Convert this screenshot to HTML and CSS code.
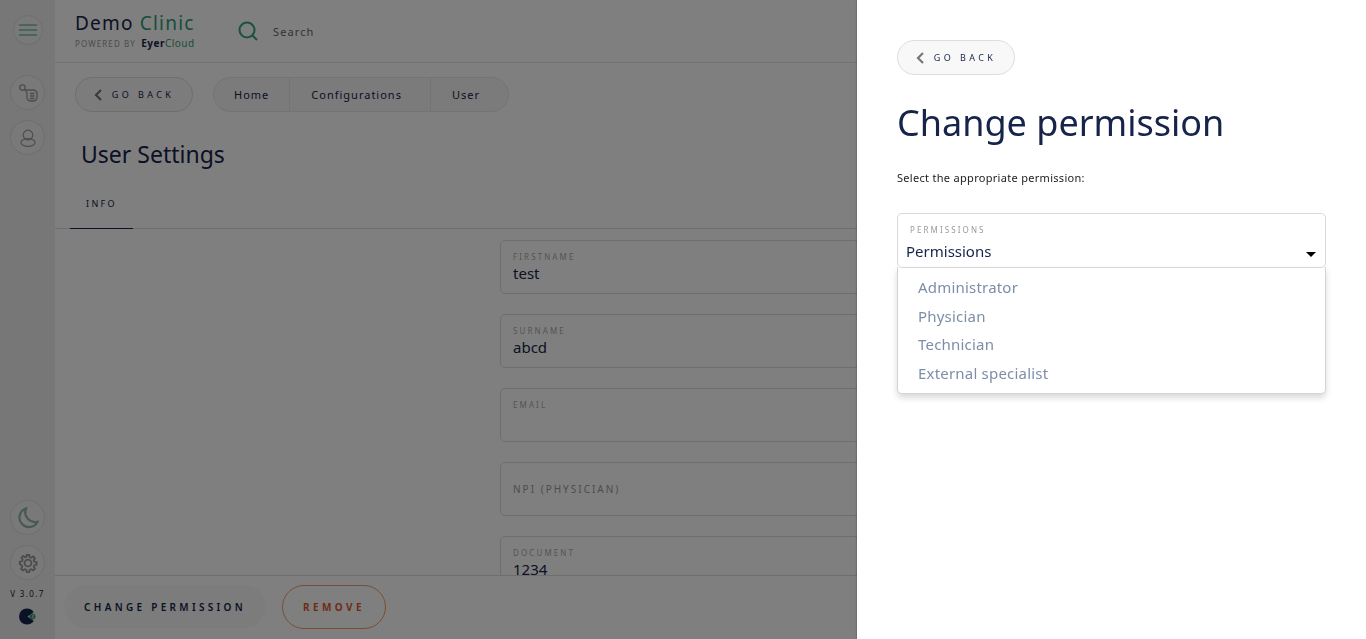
FILE: index.html
```html
<!DOCTYPE html>
<html lang="en">
<head>
    <meta charset="UTF-8">
    <meta name="viewport" content="width=device-width, initial-scale=1.0">
    <title>Change permission - Demo Clinic</title>
    <link rel="stylesheet" href="styles.css">
</head>
<body>
    <div class="app">
        <aside class="sidebar">
            <button class="side-btn side-btn-menu">
                <svg width="18" height="12" viewBox="0 0 18 12" fill="none" stroke="#35a583" stroke-width="1.2"><path d="M0 1h18M0 6h18M0 11h18"/></svg>
            </button>
            <button class="side-btn side-btn-first">
                <svg width="20" height="20" viewBox="0 0 20 20" fill="none" stroke="#999" stroke-width="1.3"><circle cx="4.5" cy="4.5" r="2.7"/><path d="M7 7h8.5a3.5 3.5 0 0 1 3.5 3.5v4a3.5 3.5 0 0 1-3.5 3.500h-3a3.500 3.500 0 0 1-3.500-3.500v-4.500z"/><path d="M12 10.500h4.500M12 13h4.500M12 15.500h4.500"/></svg>
            </button>
            <button class="side-btn">
                <svg width="16" height="18" viewBox="0 0 16 18" fill="none" stroke="#999" stroke-width="1.2"><circle cx="8" cy="6" r="4.800"/><ellipse cx="8" cy="13.500" rx="7" ry="3.800"/></svg>
            </button>
            <div class="side-spacer"></div>
            <button class="side-btn">
                <svg width="22" height="22" viewBox="0 0 22 22" fill="none" stroke="#8fb3a6" stroke-width="2.200"><path d="M9 1.500a9.500 9.500 0 1 0 11.500 13.200A9.800 9.800 0 0 1 9 1.500z"/></svg>
            </button>
            <button class="side-btn side-btn-gear">
                <svg width="20" height="20" viewBox="-1 -1 22 22" fill="none" stroke="#999" stroke-width="2"><circle cx="10" cy="10" r="3.800"/><path d="M8.600 1h2.800l.5 2.500 1.700.7 2.100-1.400 2 2-1.400 2.100.7 1.700 2.500.5v2.800l-2.500.5-.7 1.700 1.400 2.100-2 2-2.100-1.400-1.700.7-.5 2.500H8.600l-.5-2.500-1.700-.7-2.100 1.400-2-2 1.400-2.100-.7-1.700L1 11.400V8.600l2.500-.5.7-1.700-1.400-2.100 2-2 2.100 1.400 1.700-.7z"/></svg>
            </button>
            <div class="version">V 3.0.7</div>
            <svg class="side-logo" width="17" height="17" viewBox="0 0 17 17"><circle cx="8" cy="8.500" r="8" fill="#16244a"/><path d="M17 2.500 8.500 8.500 17 14.500z" fill="#eee"/><circle cx="13.500" cy="8.500" r="3" fill="#2f9c77"/><path d="M15 6.800 13 8.500l2 1.700" fill="none" stroke="#ddd" stroke-width="1"/></svg>
        </aside>

        <div class="main">
            <header class="topbar">
                <div class="brand">
                    <div class="brand-name">Demo <span class="green">Clinic</span></div>
                    <div class="brand-sub">POWERED BY <b>Eyer</b><span class="green-cloud">Cloud</span></div>
                </div>
                <svg class="search-icon" width="20" height="20" viewBox="0 0 20 20" fill="none" stroke="#35a583" stroke-width="2"><circle cx="9" cy="9" r="7.500"/><path d="M14.500 14.500 19 19"/></svg>
                <span class="search-text">Search</span>
            </header>

            <div class="crumb-row">
                <button class="back-btn">
                    <svg width="8" height="12" viewBox="0 0 8 12" fill="none" stroke="#777" stroke-width="2.200"><path d="M7 1 2 6l5 5"/></svg>
                    GO BACK
                </button>
                <nav class="crumbs">
                    <span class="crumb">Home</span>
                    <span class="crumb">Configurations</span>
                    <span class="crumb">User</span>
                </nav>
            </div>

            <h2 class="page-title">User Settings</h2>

            <div class="tabs">
                <span class="tab">INFO</span>
            </div>

            <div class="form-area">
                <div class="field"><label>FIRSTNAME</label><div class="value">test</div></div>
                <div class="field"><label>SURNAME</label><div class="value">abcd</div></div>
                <div class="field"><label>EMAIL</label><div class="value"></div></div>
                <div class="field field-center"><label>NPI (PHYSICIAN)</label></div>
                <div class="field"><label>DOCUMENT</label><div class="value">1234</div></div>
            </div>

            <footer class="actions">
                <button class="action-change">CHANGE PERMISSION</button>
                <button class="action-remove">REMOVE</button>
            </footer>
        </div>
    </div>

    <div class="overlay"></div>

    <section class="panel">
        <button class="back-btn back-btn-panel">
            <svg width="8" height="12" viewBox="0 0 8 12" fill="none" stroke="#777" stroke-width="2.200"><path d="M7 1 2 6l5 5"/></svg>
            GO BACK
        </button>
        <h1 class="panel-title">Change permission</h1>
        <p class="panel-text">Select the appropriate permission:</p>

        <div class="select">
            <label>PERMISSIONS</label>
            <div class="select-value">Permissions</div>
            <span class="select-arrow"></span>
        </div>
        <ul class="options">
            <li>Administrator</li>
            <li>Physician</li>
            <li>Technician</li>
            <li>External specialist</li>
        </ul>
    </section>
</body>
</html>
```

FILE: styles.css
```css
* {
    box-sizing: border-box;
}
body {
    margin: 0;
    font-family: "Noto Sans", "Open Sans", sans-serif;
    background-color: #fff;
    color: #16244a;
    height: 100vh;
    overflow: hidden;
}
button {
    font-family: inherit;
    cursor: pointer;
}
.app {
    display: flex;
    height: 100vh;
}

/* sidebar */
.sidebar {
    width: 55px;
    flex-shrink: 0;
    background-color: #eeeeee;
    display: flex;
    flex-direction: column;
    align-items: center;
    padding: 15px 0 14px;
}
.side-btn {
    width: 35px;
    height: 35px;
    padding: 0;
    border: 1px solid #ddd;
    border-radius: 50%;
    background-color: #f2f2f2;
    display: flex;
    align-items: center;
    justify-content: center;
    margin-bottom: 10px;
    flex-shrink: 0;
}
.side-btn-menu {
    width: 30px;
    height: 30px;
    margin-bottom: 0;
}
.side-btn-first {
    margin-top: 30px;
}
.side-btn-gear {
    margin-bottom: 0;
}
.side-spacer {
    flex: 1;
}
.version {
    font-size: 8px;
    letter-spacing: 1.4px;
    margin-top: 9px;
    line-height: 10px;
    white-space: nowrap;
}
.side-logo {
    margin-top: 9px;
}

/* main column */
.main {
    flex: 1;
    min-width: 0;
    display: flex;
    flex-direction: column;
    background-color: #fff;
}
.topbar {
    height: 63px;
    flex-shrink: 0;
    border-bottom: 1px solid #e4e4e4;
    padding-left: 20px;
    display: flex;
    align-items: center;
}
.brand {
    width: 163px;
    padding-bottom: 2px;
}
.brand-name {
    font-size: 19px;
    line-height: 24px;
    letter-spacing: 1.2px;
    margin-bottom: 2px;
}
.green {
    color: #2f9c77;
}
.brand-sub {
    font-size: 8px;
    line-height: 13px;
    letter-spacing: 1.1px;
    color: #999;
    white-space: nowrap;
}
.brand-sub b {
    color: #16244a;
    font-size: 10px;
    margin-left: 2px;
    letter-spacing: .5px;
}
.green-cloud {
    color: #2f9c77;
    font-size: 10px;
    letter-spacing: .5px;
}
.search-icon {
    flex-shrink: 0;
}
.search-text {
    margin-left: 15px;
    font-size: 11px;
    letter-spacing: 1.1px;
    color: #666;
}

.crumb-row {
    display: flex;
    align-items: center;
    padding: 14px 0 0 20px;
    gap: 20px;
}
.back-btn {
    width: 118px;
    height: 35px;
    border: 1px solid #ddd;
    border-radius: 18px;
    background-color: #f8f8f8;
    color: #16244a;
    font-size: 9px;
    letter-spacing: 3.4px;
    display: flex;
    align-items: center;
    justify-content: center;
    gap: 10px;
    padding: 0;
}
.crumbs {
    display: flex;
    height: 35px;
    border: 1px solid #e8e8e8;
    border-radius: 18px;
    background-color: #f6f6f6;
    font-size: 11px;
    letter-spacing: 1px;
}
.crumb {
    display: flex;
    align-items: center;
    padding: 0 28px 0 21px;
    border-right: 1px solid #e8e8e8;
}
.crumb:first-child {
    padding: 0 20px;
}
.crumb:last-child {
    border-right: 0;
}
.page-title {
    font-size: 23px;
    font-weight: 400;
    line-height: 30px;
    margin: 27px 0 0 26px;
}
.tabs {
    height: 44px;
    margin-top: 16px;
    padding-left: 15px;
    border-bottom: 1px solid #ddd;
    flex-shrink: 0;
}
.tab {
    display: inline-block;
    width: 63px;
    height: 44px;
    border-bottom: 1px solid #16244a;
    text-align: center;
    font-size: 9px;
    letter-spacing: 2.3px;
    line-height: 38px;
}
.form-area {
    flex: 1;
    min-height: 0;
    overflow: hidden;
    padding: 11px 0 0 445px;
    display: flex;
    flex-direction: column;
    gap: 20px;
}
.field {
    height: 54px;
    flex-shrink: 0;
    border: 1px solid #ddd;
    border-radius: 5px;
    padding: 10px 12px;
}
.field label {
    display: block;
    font-size: 8px;
    letter-spacing: 2.1px;
    line-height: 11px;
    color: #aaa;
}
.field-center {
    display: flex;
    align-items: center;
    padding-top: 0;
    padding-bottom: 0;
}
.field-center label {
    font-size: 10px;
    letter-spacing: 2px;
    color: #999;
}
.value {
    font-size: 15px;
    line-height: 20px;
    margin-top: 1px;
}
.actions {
    height: 64px;
    flex-shrink: 0;
    border-top: 1px solid #ddd;
    display: flex;
    align-items: center;
    padding: 0 0 2px 9px;
    gap: 16px;
}
.action-change {
    width: 202px;
    height: 43px;
    border: 0;
    border-radius: 22px;
    background-color: #f8f8f8;
    color: #16244a;
    font-size: 10px;
    font-weight: 600;
    letter-spacing: 3.3px;
    padding: 0;
}
.action-remove {
    width: 104px;
    height: 44px;
    border: 1px solid #ef9b6b;
    border-radius: 22px;
    background-color: transparent;
    color: #e2562a;
    font-size: 10px;
    font-weight: 700;
    letter-spacing: 3.4px;
    padding: 0;
}

/* modal */
.overlay {
    position: fixed;
    inset: 0;
    background-color: rgba(0, 0, 0, .5);
}
.panel {
    position: fixed;
    top: 0;
    right: 0;
    bottom: 0;
    width: 509px;
    background-color: #fff;
    padding: 40px 40px 0;
    box-shadow: 0 0 2px rgba(0, 0, 0, .4);
}
.panel-title {
    font-size: 36px;
    font-weight: 400;
    line-height: 46px;
    margin: 25px 0 0;
    white-space: nowrap;
}
.panel-text {
    font-size: 11px;
    line-height: 16px;
    letter-spacing: .3px;
    margin: 24px 0 0;
    color: #222;
}
.select {
    position: relative;
    height: 55px;
    margin-top: 27px;
    border: 1px solid #d8d8d8;
    border-radius: 5px;
    padding: 10px 8px 0;
}
.select label {
    display: block;
    font-size: 8px;
    line-height: 11px;
    letter-spacing: 2.1px;
    color: #999;
    padding-left: 4px;
}
.select-value {
    font-size: 15px;
    line-height: 20px;
    margin-top: 6px;
    color: #16244a;
}
.select-arrow {
    position: absolute;
    right: 9px;
    bottom: 10px;
    border-left: 5px solid transparent;
    border-right: 5px solid transparent;
    border-top: 5px solid #000;
}
.options {
    list-style: none;
    margin: -1px 0 0;
    padding: 6px 20px 6px;
    border: 1px solid #d4d4d4;
    border-top: 0;
    border-radius: 0 0 5px 5px;
    background-color: #fff;
    box-shadow: 0 4px 6px rgba(0, 0, 0, .15);
    font-size: 15px;
    letter-spacing: .2px;
    color: #7d8ea8;
}
.options li {
    line-height: 28.6px;
}
```
